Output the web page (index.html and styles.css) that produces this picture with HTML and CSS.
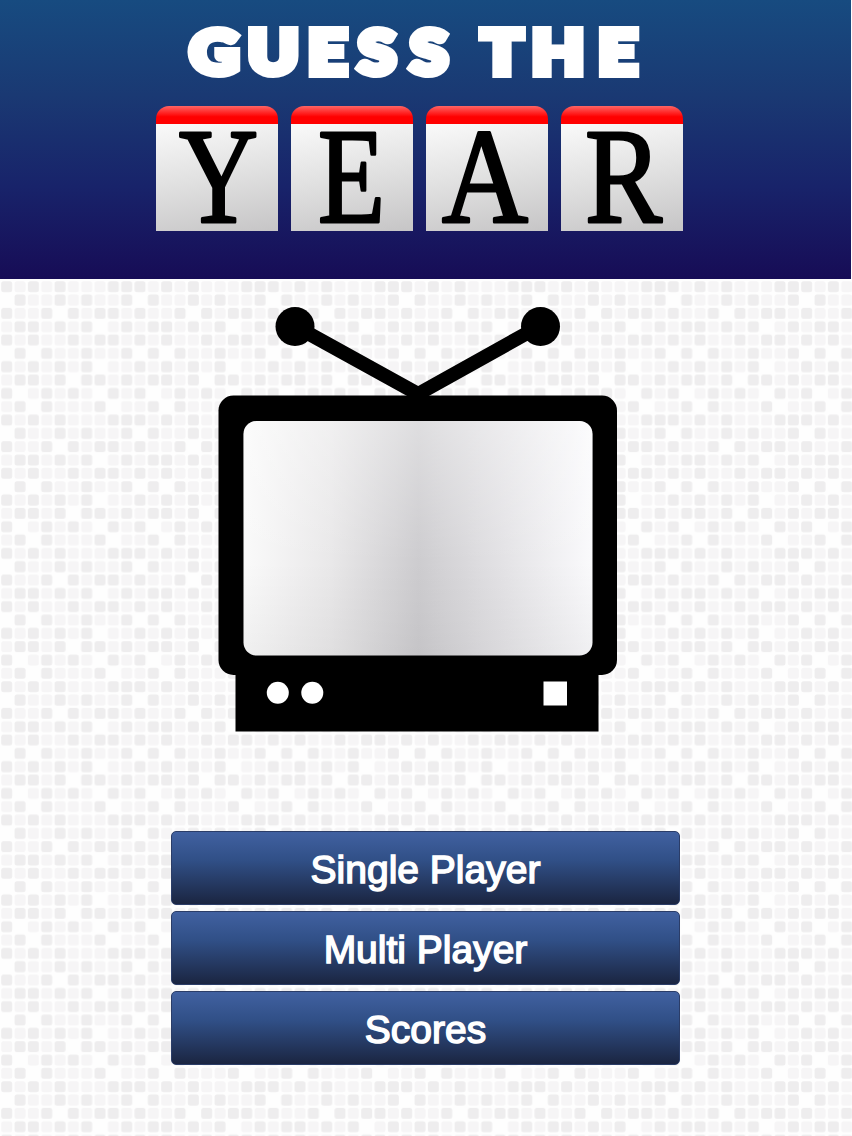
FILE: index.html
```html
<!DOCTYPE html>
<html lang="en">
<head>
    <meta charset="UTF-8">
    <title>Guess the Year</title>
    <link rel="stylesheet" href="styles.css">
</head>
<body>
    <svg class="mosaic" width="852" height="856">
        <defs>
            <pattern id="tiles" width="133.333" height="133.333" patternUnits="userSpaceOnUse"></pattern>
        </defs>
        <rect width="852" height="856" fill="url(#tiles)"/>
    </svg>

    <header class="banner">
        <svg class="title" width="470" height="66" viewBox="180 20 470 66">
            <text y="74" transform="scale(1.13 1)" x="168 219.500 272.500 317 363 427 426 470.500 529.500">GUESS THE</text>
        </svg>
        <div class="cards">
            <div class="card">
                <svg width="122" height="107"><text x="23" y="98" textLength="79" lengthAdjust="spacingAndGlyphs">Y</text></svg>
            </div>
            <div class="card">
                <svg width="122" height="107"><text x="27" y="98" textLength="67" lengthAdjust="spacingAndGlyphs">E</text></svg>
            </div>
            <div class="card">
                <svg width="122" height="107"><text x="16" y="98" textLength="86" lengthAdjust="spacingAndGlyphs">A</text></svg>
            </div>
            <div class="card">
                <svg width="122" height="107"><text x="24" y="98" textLength="77" lengthAdjust="spacingAndGlyphs">R</text></svg>
            </div>
        </div>
    </header>

    <main>
        <svg class="tv" width="400" height="428" viewBox="218 305 400 428">
            <defs>
                <linearGradient id="screen">
                    <stop offset="0" stop-color="#fafafa"/>
                    <stop offset="0.25" stop-color="#e9e8e9"/>
                    <stop offset="0.5" stop-color="#cdcccf"/>
                    <stop offset="0.75" stop-color="#e4e3e6"/>
                    <stop offset="1" stop-color="#fafafc"/>
                </linearGradient>
                <linearGradient id="shine" x1="0" y1="0" x2="0" y2="1">
                    <stop offset="0" stop-color="#fff" stop-opacity="0.35"/>
                    <stop offset="0.6" stop-color="#fff" stop-opacity="0"/>
                    <stop offset="0.6" stop-color="#000" stop-opacity="0"/>
                    <stop offset="1" stop-color="#000" stop-opacity="0.04"/>
                </linearGradient>
            </defs>
            <path d="M295 326L418 394L540 326" fill="none" stroke="#000" stroke-width="14"/>
            <circle cx="295" cy="326.500" r="19.500"/>
            <circle cx="540.500" cy="326.500" r="19.500"/>
            <rect x="218.500" y="395.500" width="398.500" height="279.500" rx="15"/>
            <rect x="235.500" y="650" width="363" height="81.500"/>
            <rect x="243.500" y="421" width="349" height="234.500" rx="13" fill="url(#screen)"/>
            <rect x="243.500" y="421" width="349" height="234.500" rx="13" fill="url(#shine)"/>
            <circle cx="277.800" cy="692.800" r="11" fill="#fff"/>
            <circle cx="312.300" cy="692.800" r="11" fill="#fff"/>
            <rect x="543.500" y="681.500" width="23.500" height="24" fill="#fff"/>
        </svg>

        <div class="menu">
            <button type="button">Single Player</button>
            <button type="button">Multi Player</button>
            <button type="button">Scores</button>
        </div>
    </main>

    <script>
        // D = dark square, l = light square, . = empty
        const rows = [
            "DlDlDlllDD",
            ".DllDlDllD",
            "DllD.DlDDl",
            "lDDlDlD.lD",
            "DlDllDlDDl",
            ".D.DllDllD",
            "DlDlDlD.ll",
            "lDDlD.DDlD",
            "D.lDlDl.Dl",
            "lD.DlllD.l"
        ];
        const tiles = document.getElementById('tiles');
        const step = 133.333 / 10;
        rows.forEach((row, y) => {
            [...row].forEach((type, x) => {
                if (type === ".") return;
                const rect = document.createElementNS('http://www.w3.org/2000/svg', 'rect');
                rect.setAttribute('x', x * step + 1.2);
                rect.setAttribute('y', y * step + 1.2);
                rect.setAttribute('width', 11);
                rect.setAttribute('height', 11);
                rect.setAttribute('rx', 2.5);
                rect.setAttribute('fill', type === "D" ? "#eeedee" : "#f6f5f6");
                tiles.appendChild(rect);
            });
        });
    </script>
</body>
</html>
```
FILE: styles.css
```css
body {
    margin: 0;
    width: 852px;
    height: 1136px;
    background: #fefefe;
    font-family: "Liberation Sans", Arial, sans-serif;
    position: relative;
    overflow: hidden;
}

.mosaic {
    position: absolute;
    left: 0;
    top: 280px;
    z-index: -1;
}

.banner {
    width: 851px;
    height: 279px;
    box-sizing: border-box;
    padding-top: 20px;
    background: linear-gradient(#174b80 0%, #1a3973 34%, #18236a 67%, #170c56 100%);
}

.title {
    display: block;
    margin-left: 180px;
    overflow: visible;
}
.title text {
    font-family: Lato, sans-serif;
    font-weight: 900;
    font-size: 60px;
    fill: #fff;
    stroke: #fff;
    stroke-width: 8px;
}

.cards {
    display: flex;
    gap: 13px;
    margin: 20px 0 0 155.5px;
}
.card {
    width: 122px;
    height: 125px;
    box-sizing: border-box;
    padding-top: 18px;
    border-radius: 13px 13px 0 0;
    background:
        linear-gradient(#ff6464, #ff0000 60%) top / 100% 18px no-repeat,
        linear-gradient(170deg, #f8f8f8 15%, #e1e1e1 55%, #c6c5c6 100%);
}
.card svg {
    display: block;
    overflow: visible;
}
.card text {
    font-family: "Liberation Serif", serif;
    font-size: 136px;
    stroke: #000;
    stroke-width: 3px;
    stroke-linejoin: round;
}

.tv {
    display: block;
    margin: 26px 0 0 218px;
}

.menu {
    width: 509px;
    margin: 98px 0 0 171px;
    display: flex;
    flex-direction: column;
    gap: 6px;
}
.menu button {
    height: 74px;
    padding: 3px 0 0;
    border: 1px solid #2b3d68;
    border-radius: 5px;
    background: linear-gradient(#4161a1 0%, #304f86 40%, #1b2541 100%);
    color: #fff;
    font-family: inherit;
    font-size: 39px;
    line-height: 69px;
    -webkit-text-stroke: 1.5px #fff;
}
```
